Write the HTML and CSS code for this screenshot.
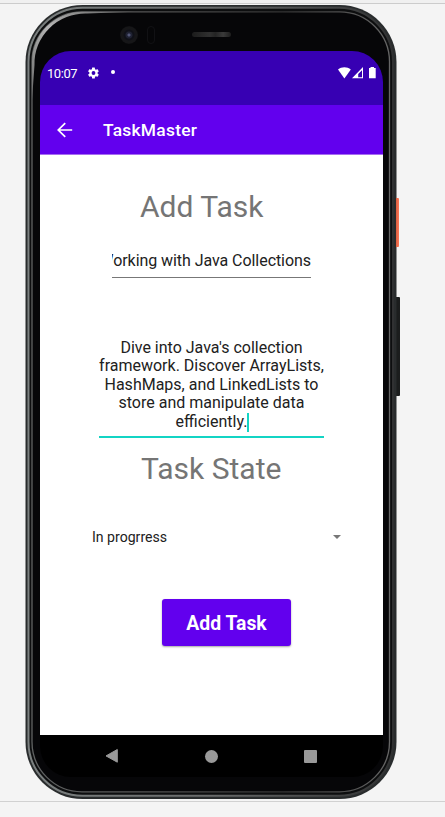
FILE: index.html
```html
<!DOCTYPE html>
<html lang="en">
<head>
<meta charset="utf-8">
<title>TaskMaster</title>
<link rel="stylesheet" href="styles.css">
</head>
<body>
<main class="stage">
  <div class="phone">
    <span class="side-key power"></span>
    <span class="side-key volume"></span>
    <svg class="shell" width="372" height="794" viewBox="0 0 372 794">
      <defs>
        <linearGradient id="rim" x1="0" y1="0" x2="1" y2="0">
          <stop offset="0" stop-color="#7b8080"/><stop offset=".5" stop-color="#686a6a"/><stop offset="1" stop-color="#303132"/>
        </linearGradient>
        <linearGradient id="glint" x1="0" y1="0" x2="1" y2="0">
          <stop offset="0" stop-color="#606262"/><stop offset=".3" stop-color="#555"/><stop offset=".7" stop-color="#333"/><stop offset="1" stop-color="#666"/>
        </linearGradient>
        <linearGradient id="crescent" x1="0" y1="1" x2="1" y2="0">
          <stop offset="0" stop-color="#666"/><stop offset=".5" stop-color="#b4b4b4"/><stop offset="1" stop-color="#555"/>
        </linearGradient>
      </defs>
      <rect x="0.500" y="0" width="371" height="794" rx="57" fill="#292c2d"/>
      <rect x="3.500" y="2.800" width="364.500" height="788" rx="54" fill="#0d0e0f" stroke="url(#rim)" stroke-width="2"/>
      <rect x="7" y="6.800" width="357.500" height="780" rx="50" fill="#060608" stroke="url(#glint)" stroke-width="1.300"/>
      <path d="M7 95V57A50 50 0 0 1 57 6.800H110L62 8.500A51 50 0 0 0 9.500 60z" fill="url(#crescent)"/>
    </svg>
    <div class="bezel">
      <span class="camera"></span>
      <span class="sensor"></span>
      <span class="speaker"></span>
    </div>
    <div class="screen">
      <div class="status">
        <span class="clock">10:07</span>
        <svg class="gear" width="14" height="14" viewBox="0 0 24 24"><path fill="#fff" fill-rule="evenodd" d="M19.4 13a7.500 7.500 0 0 0 0-2l2.100-1.600c.2-.2.300-.4.100-.7l-2-3.400c-.1-.3-.4-.3-.6-.2l-2.500 1a7.300 7.300 0 0 0-1.700-1l-.4-2.600a.5.5 0 0 0-.5-.5h-4a.5.5 0 0 0-.5.500L9 5.100a7.300 7.300 0 0 0-1.700 1l-2.500-1c-.2-.1-.5 0-.6.2l-2 3.400c-.2.300-.1.500.1.700L4.500 11a7.500 7.500 0 0 0 0 2l-2.200 1.600c-.2.200-.3.400-.1.700l2 3.400c.1.300.4.300.6.200l2.500-1c.5.400 1.100.8 1.700 1l.4 2.600c0 .3.200.5.500.5h4c.3 0 .5-.2.500-.5l.4-2.600a7.300 7.300 0 0 0 1.700-1l2.500 1c.2.100.5 0 .6-.2l2-3.400c.2-.3.100-.5-.1-.7zM12 15.500a3.500 3.500 0 1 1 0-7 3.500 3.500 0 0 1 0 7z"/></svg>
        <span class="notice"></span>
        <svg class="signals" width="38" height="12" viewBox="0 0 38 12">
          <path fill="#fff" d="M0 2.600C3.500-.6 9.300-.6 12.800 2.600L6.400 11.400z"/>
          <path fill="#fff" fill-rule="evenodd" d="M14 11.300 25 0v11.300zM20.200 10.200H24V3.200l-3.800 3.900z"/>
          <path fill="#fff" d="M32.500 0h3.500v1H37.700v10.200H31V1h1.500z"/>
        </svg>
      </div>
      <header class="appbar">
        <svg width="16" height="16" viewBox="0 0 14 14"><path d="M13.300 7H1.500M7.200.9 1.100 7l6.100 6.100" fill="none" stroke="#fff" stroke-width="1.500"/></svg>
        <h1>TaskMaster</h1>
      </header>
      <section class="content">
        <h2 class="heading add-heading">Add Task</h2>
        <div class="title-field"><span>Working with Java Collections</span></div>
        <div class="desc-field">Dive into Java's collection<br>framework. Discover ArrayLists,<br>HashMaps, and LinkedLists to<br>store and manipulate data<br>efficiently.<i class="caret"></i></div>
        <h2 class="heading state-heading">Task State</h2>
        <div class="spinner"><span>In progrress</span><i class="arrow"></i></div>
        <button class="submit">Add Task</button>
      </section>
      <nav class="navbar">
        <svg width="14" height="16" viewBox="0 0 14 16"><path d="M12.300 1.500v12.700L1 7.900z" fill="#999" stroke="#999" stroke-linejoin="round"/></svg>
        <span class="home"></span>
        <span class="recent"></span>
      </nav>
    </div>
  </div>
</main>
</body>
</html>
```
FILE: styles.css
```css
* { box-sizing: border-box; }
body { margin: 0; background: #f4f4f4; font-family: Roboto, sans-serif; }
.stage { height: 817px; padding: 5px 0 0 25px; overflow: hidden;
  background: linear-gradient(#f0f0f0 0 3px, #ccc 3px 4px, transparent 4px 801px, #d1d1d1 801px 802px, transparent 802px); }
.phone { position: relative; width: 372px; height: 794px; padding: 0 14px 0 15px; }
.shell { position: absolute; left: 0; top: 0; }
.side-key { position: absolute; border-radius: 0 1px 1px 0; }
.power { left: 371px; top: 193px; width: 3px; height: 49px; background: linear-gradient(90deg, #d85f42, #ff7857); z-index: 1; }
.volume { left: 370px; top: 292px; width: 5px; height: 99px; background: #1b1d1d; }
.bezel { position: relative; height: 46px; }
.camera { position: absolute; left: 80px; top: 21px; width: 18px; height: 18px; border-radius: 50%;
  background: radial-gradient(circle, #55597a 0 1px, #1f2233 2px 3px, #0f1017 4px 5px, #161618 6px 8px, #101012 9px); }
.sensor { position: absolute; left: 107px; top: 21px; width: 8px; height: 18px; border: 1px solid #111114; border-radius: 4px; }
.speaker { position: absolute; left: 152px; top: 27px; width: 39px; height: 5px; border-radius: 3px;
  background: linear-gradient(90deg, #1c1c1c, #303030 45%, #242424 60%, #3a3a3a 80%, #1d1d1d); }
.screen { position: relative; display: flex; flex-direction: column; width: 343px; height: 726px; overflow: hidden; border-radius: 31px; }
.status { display: flex; align-items: flex-start; height: 54px; padding: 15px 7px 0; background: #3700b3; color: #fff; }
.clock { width: 40px; font-size: 13px; line-height: 15px; letter-spacing: -.45px; }
.gear { width: 13px; margin: -.5px 0 0 0; }
.notice { width: 4px; height: 4px; margin: 4px 0 0 11px; border-radius: 50%; background: #fff; }
.signals { margin: 1px 0 0 auto; }
.appbar { display: flex; align-items: center; height: 50px; padding: 1px 17px 0; border-bottom: 1px solid #a66cf0; background: #6200ee; color: #fff; }
.appbar h1 { margin: 0 0 0 30px; font-size: 17.400px; line-height: 20px; font-weight: 500; letter-spacing: .25px; }
.content { display: flex; flex-direction: column; flex: 1; background: #fff; color: #212121; }
.heading { margin: 0; font-weight: 400; font-size: 30px; line-height: 36px; color: #757575; white-space: nowrap; }
.add-heading { margin: 34px 0 0 100px; }
.title-field { display: flex; justify-content: flex-end; width: 199px; height: 35px; margin: 18px 0 0 72px; padding-top: 8px; overflow: hidden; border-bottom: 1px solid #777; font-size: 16px; line-height: 20px; letter-spacing: -.06px; white-space: nowrap; }
.desc-field { width: 225px; height: 100px; margin: 60px 0 0 59px; padding-top: .6px; border-bottom: 2px solid #13d4c4; font-size: 16px; line-height: 18.500px; text-align: center; white-space: nowrap; }
.caret { display: inline-block; width: 2px; height: 19px; margin-right: -2px; vertical-align: -5px; background: #13d4c4; }
.state-heading { margin: 13px 0 0 101px; }
.spinner { display: flex; align-items: center; justify-content: space-between; width: 249px; height: 20px; margin: 40px 0 0 52px; font-size: 14.100px; }
.arrow { border: 4px solid transparent; border-top-color: #777; border-bottom: 0; }
.submit { width: 129px; height: 47px; margin: 52px 0 0 122px; padding: 2px 0 0; border: 0; border-radius: 3px; background: #6200ee; color: #fff; font: 700 19.400px/45px Roboto, sans-serif; box-shadow: 0 1px 2px rgba(0,0,0,.35); }
.navbar { display: flex; align-items: center; height: 42px; padding: 0 66px 0 65px; justify-content: space-between; background: #000; }
.home { width: 13px; height: 13px; border-radius: 50%; background: #999; }
.recent { width: 13px; height: 13px; border-radius: 1px; background: #999; }
```
